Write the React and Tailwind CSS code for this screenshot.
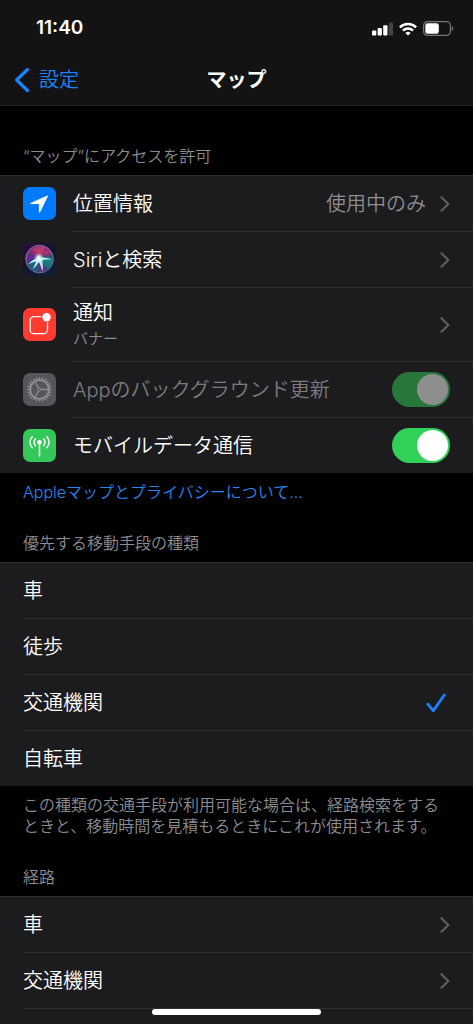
import React from "react";

const TILE = "size-[33px] shrink-0";

function LocationIcon() {
  return (
    <svg viewBox="0 0 33 33" className={TILE} aria-hidden="true">
      <rect width="33" height="33" rx="7" fill="#007aff" />
      <path d="M24.3 8.6 7.6 16.1c-.7.3-.5 1 .2 1h8.1v8c0 .8.9.9 1.200.2L24.900 9.300c.2-.5-.1-.9-.6-.7Z" fill="#fff" />
    </svg>
  );
}

function SiriIcon() {
  return (
    <svg viewBox="0 0 33 33" className={TILE} aria-hidden="true">
      <defs>
        <linearGradient id="siri-back" x1="0" y1="0" x2="0.6" y2="1">
          <stop offset="0" stopColor="#2f0c4a" />
          <stop offset="0.5" stopColor="#14132c" />
          <stop offset="1" stopColor="#0d2038" />
        </linearGradient>
        <linearGradient id="siri-orb" x1="0.35" y1="0" x2="0.6" y2="1">
          <stop offset="0" stopColor="#6d2878" />
          <stop offset="0.35" stopColor="#a8326e" />
          <stop offset="0.55" stopColor="#35407f" />
          <stop offset="1" stopColor="#152a55" />
        </linearGradient>
        <radialGradient id="siri-glow">
          <stop offset="0" stopColor="#fff" />
          <stop offset="0.4" stopColor="#dffbff" stopOpacity="0.8" />
          <stop offset="1" stopColor="#7fe9ff" stopOpacity="0" />
        </radialGradient>
      </defs>
      <rect width="33" height="33" rx="7" fill="url(#siri-back)" />
      <circle cx="16.500" cy="16" r="13.800" fill="url(#siri-orb)" />
      <path d="M16 16C10 9 6 9 4.500 12c-1.500 4-1 7 1 9 3 0 7-2 10.500-5Z" fill="#4b2f96" opacity=".75" />
      <path d="M16 16 5 20.500c2 5 6 8 9 8.500Z" fill="#176a85" opacity=".85" />
      <path d="M16 16c5-3 10-3 13.500-.5 0 5-2 8-5 10.500Z" fill="#15877c" opacity=".85" />
      <path d="M16 16 14 29c3 1 7 0 10-3Z" fill="#6b3d8e" opacity=".7" />
      <path d="M16 15.500c-1-5-4-8-7.500-9C12 3.500 18 2 23 4.500c-3 3-5 6-7 11Z" fill="#d8436f" opacity=".55" />
      <path d="M4.500 21.500c3-3 6.500-5.200 9.500-6.500l1.500-3 2 2.400c4 0 8 .7 11.500 2.200-4 0-7.500.1-10 .6 1 3.500 1.200 7 .3 11.300-.9-4-2-7-3.300-9.800-1.500 2.500-3.500 5-6 7.300 1-3 2.200-5.200 3.300-7.400-3.200.6-6 1.500-8.800 2.900Z" fill="#d9fcf8" opacity=".9" />
      <circle cx="16" cy="15.500" r="5.500" fill="url(#siri-glow)" />
      <circle cx="16.500" cy="16" r="13.800" fill="none" stroke="#8f8aa8" strokeWidth=".9" opacity=".9" />
    </svg>
  );
}

function NotificationIcon() {
  return (
    <svg viewBox="0 0 33 33" className={TILE} aria-hidden="true">
      <rect width="33" height="33" rx="7" fill="#ff3b30" />
      <rect x="7.200" y="8.700" width="17.300" height="17" rx="3.800" fill="none" stroke="#fff" strokeWidth="1.300" />
      <circle cx="23.500" cy="9.200" r="5.400" fill="#ff3b30" />
      <circle cx="23.500" cy="9.200" r="4.200" fill="#fff" />
    </svg>
  );
}

const TEETH = Array.from({ length: 24 }, (_, i) => i * 15);

function GearIcon() {
  return (
    <svg viewBox="0 0 33 33" className={TILE} aria-hidden="true">
      <rect width="33" height="33" rx="7" fill="#56565a" />
      <g stroke="#8f8f94" fill="none">
        <circle cx="16.500" cy="16.500" r="9.300" strokeWidth="1.800" />
        {TEETH.map((a) => (
          <path key={a} d="M16.500 6.800V4.200" strokeWidth="1.300" transform={`rotate(${a} 16.5 16.5)`} />
        ))}
        <circle cx="16.500" cy="16.500" r="1.600" strokeWidth="1" />
        <path d="M18 16.500h7.500M15.700 15.200 12 8.700M15.700 17.800 12 24.300" strokeWidth="1.300" />
      </g>
    </svg>
  );
}

function AntennaIcon() {
  return (
    <svg viewBox="0 0 33 33" className={TILE} aria-hidden="true">
      <rect width="33" height="33" rx="7" fill="#34c759" />
      <circle cx="16.500" cy="13.200" r="2.300" fill="#fff" />
      <g stroke="#fff" strokeWidth="1.500" strokeLinecap="round" fill="none">
        <path d="M16.500 14v13" />
        <path d="M12.400 9.800c-1.500 2-1.500 4.900 0 6.900M20.600 9.800c1.500 2 1.500 4.900 0 6.900" />
        <path d="M9.200 7.700c-3 3.200-3 7.900 0 11.100M23.800 7.700c3 3.200 3 7.900 0 11.100" />
      </g>
    </svg>
  );
}

function Chevron() {
  return (
    <svg viewBox="0 0 10 16" className="h-4 w-[10px] shrink-0" aria-hidden="true">
      <path d="M1.500 1.300 8.300 8l-6.800 6.700" fill="none" stroke="#5d5d61" strokeWidth="2.300" strokeLinecap="round" strokeLinejoin="round" />
    </svg>
  );
}

function StatusIcons() {
  return (
    <div className="flex items-center gap-[6px]">
      <svg viewBox="0 0 21 14" className="h-[14px] w-[21px]" aria-hidden="true">
        <rect x="0" y="8.500" width="4.300" height="5" rx="1" fill="#fff" />
        <rect x="5.600" y="6" width="4.300" height="7.500" rx="1" fill="#fff" />
        <rect x="11.200" y="3.200" width="4.300" height="10.300" rx="1" fill="#fff" />
        <rect x="16.800" y="0.500" width="4.200" height="13" rx="1" fill="#444446" />
      </svg>
      <svg viewBox="0 0 18 14" className="h-[14px] w-[18px]" aria-hidden="true">
        <g fill="none" stroke="#fff" strokeWidth="2.500">
          <path d="M.9 5.300a11.600 11.600 0 0 1 16.200 0" />
          <path d="M4 8.600a7.200 7.200 0 0 1 10 0" />
        </g>
        <path d="M9 13.600 6.300 11a3.900 3.900 0 0 1 5.400 0Z" fill="#fff" />
      </svg>
      <svg viewBox="0 0 31 15" className="h-[15px] w-[31px]" aria-hidden="true">
        <rect x=".6" y=".6" width="26.800" height="13.800" rx="4" fill="none" stroke="#767678" strokeWidth="1.200" />
        <rect x="2.300" y="2.300" width="13.500" height="10.400" rx="2.300" fill="#fff" />
        <path d="M28.800 5.200v4.600c1-.4 1.500-1.200 1.500-2.300s-.5-1.900-1.500-2.300Z" fill="#767678" />
      </svg>
    </div>
  );
}

function Group({ children }) {
  return <div className="bg-[#1c1c1e]">{children}</div>;
}

/* The first row's line spans the full width; later ones start at the label. */
const ROW = "group block w-full border-[#303033] pl-[23px] first:border-t";
const ROW_BODY = "flex min-w-0 flex-1 items-center gap-[14px] border-[#303033] pr-[23px] group-not-first:border-t";

function LinkRow({ icon, label, detail, value, tall }) {
  return (
    <a href="#" className={`${ROW} ${tall ? "h-[74px]" : "h-14"}`}>
      <span className="flex h-full items-center gap-[17px]">
        {icon}
        <span className={`${ROW_BODY} h-full`}>
          <span className="flex flex-1 flex-col">
            <span className="leading-7">{label}</span>
            {detail && <span className="text-[15px] leading-6 text-[#8d8d92]">{detail}</span>}
          </span>
          {value && <span className="text-[#8d8d92]">{value}</span>}
          <Chevron />
        </span>
      </span>
    </a>
  );
}

function SwitchRow({ icon, label, disabled }) {
  return (
    <label className={`${ROW} h-14`}>
      <span className="flex h-full items-center gap-[17px]">
        {icon}
        <span className={`${ROW_BODY} h-full`}>
          <span className={`flex-1 ${disabled ? "text-[#7c7c80]" : ""}`}>{label}</span>
          <input
            type="checkbox"
            role="switch"
            defaultChecked
            disabled={disabled}
            className="flex h-[35px] w-[58px] shrink-0 appearance-none items-center rounded-full bg-[#39393d] p-[2px] before:size-[31px] before:rounded-full before:bg-white checked:justify-end checked:bg-[#30d158] disabled:bg-[#27773b] disabled:before:bg-[#8e8e8f]"
          />
        </span>
      </span>
    </label>
  );
}

function ChoiceRow({ label, checked }) {
  return (
    <label className={`${ROW} h-14`}>
      <span className={`${ROW_BODY} h-full`}>
        <span className="flex-1">{label}</span>
        <input type="radio" name="transport" defaultChecked={checked} className="peer size-0 appearance-none" />
        <svg viewBox="0 0 20 20" className="invisible mr-1 size-5 peer-checked:visible" aria-hidden="true">
          <path d="M1.800 11.200 7.300 17.800 18.300 2" fill="none" stroke="#1a84ff" strokeWidth="2.800" strokeLinecap="round" strokeLinejoin="round" />
        </svg>
      </span>
    </label>
  );
}

const HEADING = "px-[23px] pb-2 text-base leading-[22px] text-[#8d8d92]";

export default function App() {
  return (
    <div
      lang="ja"
      className="flex min-h-screen flex-col bg-black font-['Inter','Noto_Sans_CJK_JP',sans-serif] text-[20px] font-[350] text-white"
    >
      <header className="border-b border-[#1f1f20] bg-[#131313]">
        <div className="flex h-[57px] items-center justify-between pr-[19px] pl-9">
          <time className="text-[19px] font-semibold">11:40</time>
          <StatusIcons />
        </div>
        <nav className="grid h-12 grid-cols-3 items-center pb-[2px]">
          <a href="#" className="flex items-center gap-[9px] pl-[14px] text-[#1a84ff]">
            <svg viewBox="0 0 16 26" className="h-[26px] w-4" aria-hidden="true">
              <path d="M13.500 2.500 2.600 13l10.900 10.500" fill="none" stroke="#1a84ff" strokeWidth="3.200" strokeLinecap="round" strokeLinejoin="round" />
            </svg>
            設定
          </a>
          <h1 className="text-center font-bold">マップ</h1>
        </nav>
      </header>

      <main className="flex flex-1 flex-col">
        <h2 className={`${HEADING} pt-[39px]`}>“マップ”にアクセスを許可</h2>
        <Group>
          <LinkRow icon={<LocationIcon />} label="位置情報" value="使用中のみ" />
          <LinkRow icon={<SiriIcon />} label="Siriと検索" />
          <LinkRow icon={<NotificationIcon />} label="通知" detail="バナー" tall />
          <SwitchRow icon={<GearIcon />} label="Appのバックグラウンド更新" disabled />
          <SwitchRow icon={<AntennaIcon />} label="モバイルデータ通信" />
        </Group>
        <a href="#" className="px-[23px] pt-2 text-base leading-[22px] text-[#2a86f5]">
          Appleマップとプライバシーについて...
        </a>

        <h2 className={`${HEADING} pt-[29px]`}>優先する移動手段の種類</h2>
        <Group>
          <ChoiceRow label="車" />
          <ChoiceRow label="徒歩" />
          <ChoiceRow label="交通機関" checked />
          <ChoiceRow label="自転車" />
        </Group>
        <p className="px-[23px] pt-[9px] text-base leading-[21px] text-[#8d8d92]">
          この種類の交通手段が利用可能な場合は、経路検索をするときと、移動時間を見積もるときにこれが使用されます。
        </p>

        <h2 className={`${HEADING} pt-[29px]`}>経路</h2>
        <Group>
          <LinkRow label="車" />
          <LinkRow label="交通機関" />
        </Group>
        <div className="flex flex-1 flex-col items-center bg-[#1c1c1e] pb-[9px]">
          <div className="w-full pl-[23px]">
            <div className="border-t border-[#303033]" />
          </div>
          <div className="mt-auto h-[6px] w-[169px] rounded-full bg-white" />
        </div>
      </main>
    </div>
  );
}
